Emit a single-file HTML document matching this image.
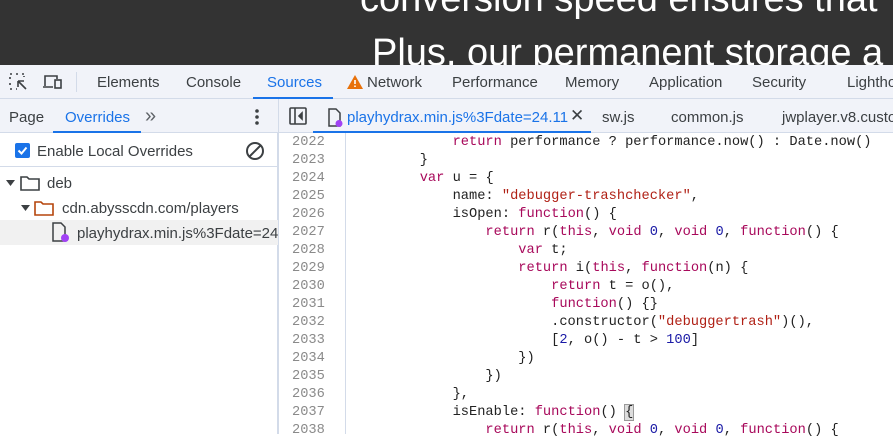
<!DOCTYPE html>
<html><head><style>
*{margin:0;padding:0;box-sizing:border-box}
body{width:893px;height:434px;overflow:hidden;position:relative;background:#fff;font-family:"Liberation Sans",Arial,sans-serif}
.top{position:absolute;left:0;top:0;width:893px;height:65px;background:#333;overflow:hidden}
.top div{position:absolute;color:#fff;font-size:38px;white-space:nowrap}
.bar{position:absolute;left:0;top:65px;width:893px;height:34px;background:#f1f3f9;border-bottom:1px solid #d3dbe9}
.t{position:absolute;font-size:15px;color:#3c4043;top:74px;white-space:nowrap}
.row2{position:absolute;top:99px;left:0;width:893px;height:34px;background:#f1f3f9;border-bottom:1px solid #d3dbe9}
.s{position:absolute;font-size:15px;color:#3c4043;white-space:nowrap}
.left{position:absolute;left:0;top:133px;width:278px;height:301px;background:#fff;border-right:1px solid #d3dbe9}
.gut{position:absolute;left:279px;top:133px;width:67px;height:301px;border-right:1px solid #d3dbe9;background:#fff}
pre{position:absolute;font-family:"Liberation Mono",monospace;font-size:13.7px;line-height:18px;white-space:pre}
.k{color:#a8095b}.str{color:#b02015}.n{color:#1a1aa6}
</style></head><body>
<div class="top"><div style="left:360px;top:-22px">conversion speed ensures that</div><div style="left:372px;top:32px">Plus, our permanent storage a</div></div>
<div class="bar"></div>
<svg style="position:absolute;left:8px;top:72px" width="22" height="20" viewBox="0 0 22 20" fill="none" stroke="#3c4043" stroke-width="1.6"><path d="M2 2h3M8 2h3M14 2h2v3M2 5v3M2 11v3M2 17h3M8 17h1" stroke-dasharray="2 2"/><path d="M10 9l8 8M10 9h6M10 9v6"/></svg>
<svg style="position:absolute;left:42px;top:73px" width="22" height="18" viewBox="0 0 22 18" fill="none" stroke="#3c4043" stroke-width="1.6"><path d="M3 13V3h12v3M1 14h10"/><rect x="13" y="7" width="6" height="8"/></svg>
<div style="position:absolute;left:76px;top:72px;width:1px;height:20px;background:#d3dbe9"></div>
<div class="t" style="left:97px">Elements</div>
<div class="t" style="left:186px">Console</div>
<div class="t" style="left:267px;color:#1a73e8">Sources</div>
<div style="position:absolute;left:253px;top:97px;width:80px;height:2px;background:#1a73e8"></div>
<svg style="position:absolute;left:347px;top:75px" width="16" height="14" viewBox="0 0 16 14"><path d="M8 0L16 14H0Z" fill="#e8710a"/><path d="M8 5v4M8 10.5v1.5" stroke="#fff" stroke-width="1.6"/></svg>
<div class="t" style="left:367px">Network</div>
<div class="t" style="left:452px">Performance</div>
<div class="t" style="left:565px">Memory</div>
<div class="t" style="left:649px">Application</div>
<div class="t" style="left:752px">Security</div>
<div class="t" style="left:847px">Lighthouse</div>
<div class="row2"></div>
<div class="s" style="left:9px;top:109px">Page</div>
<div class="s" style="left:65px;top:109px;color:#1a73e8">Overrides</div>
<div style="position:absolute;left:53px;top:131px;width:88px;height:2px;background:#1a73e8"></div>
<div class="s" style="left:145px;top:105px;font-size:20px;color:#5f6368">&#187;</div>
<svg style="position:absolute;left:254px;top:108px" width="6" height="18"><circle cx="3" cy="3" r="1.8" fill="#3c4043"/><circle cx="3" cy="9" r="1.8" fill="#3c4043"/><circle cx="3" cy="15" r="1.8" fill="#3c4043"/></svg>
<div style="position:absolute;left:278px;top:99px;width:1px;height:335px;background:#d3dbe9"></div>
<svg style="position:absolute;left:289px;top:107px" width="19" height="19" viewBox="0 0 19 19" fill="none" stroke="#3c4043" stroke-width="1.6"><rect x="1" y="1" width="16" height="16" rx="1"/><path d="M6 1v16"/><path d="M13 6l-3 3 3 3z" fill="#3c4043"/></svg>
<svg style="position:absolute;left:327px;top:108px" width="18" height="20" viewBox="0 0 18 20"><path d="M2 1h7l4 4v13H2z" fill="none" stroke="#3c4043" stroke-width="1.5"/><circle cx="12" cy="15.5" r="3.5" fill="#a142f4"/></svg>
<div class="s" style="left:347px;top:109px;color:#1a73e8">playhydrax.min.js%3Fdate=24.11</div>
<div class="s" style="left:570px;top:106px;font-size:17px;color:#3c4043">&#x2715;</div>
<div style="position:absolute;left:313px;top:131px;width:278px;height:2px;background:#1a73e8"></div>
<div class="s" style="left:602px;top:109px">sw.js</div>
<div class="s" style="left:671px;top:109px">common.js</div>
<div class="s" style="left:782px;top:109px">jwplayer.v8.custom.js</div>
<div class="left"></div>
<div style="position:absolute;left:15px;top:143px;width:15px;height:15px;background:#1a73e8;border-radius:2px"></div>
<svg style="position:absolute;left:15px;top:143px" width="15" height="15"><path d="M3.5 7.5l3 3 5-6" stroke="#fff" stroke-width="2" fill="none"/></svg>
<div class="s" style="left:37px;top:143px">Enable Local Overrides</div>
<svg style="position:absolute;left:245px;top:141px" width="20" height="20" viewBox="0 0 20 20" fill="none" stroke="#3c4043" stroke-width="2"><circle cx="10" cy="10" r="8"/><path d="M4.5 15.5l11-11"/></svg>
<div style="position:absolute;left:0;top:166px;width:278px;height:1px;background:#d3dbe9"></div>
<svg style="position:absolute;left:5px;top:175px" width="40" height="16"><path d="M1 5h9l-4.5 6z" fill="#3c4043"/><path d="M16 2h6l2 2h10v11H16z" fill="none" stroke="#3c4043" stroke-width="1.6"/></svg>
<div class="s" style="left:47px;top:175px">deb</div>
<svg style="position:absolute;left:20px;top:200px" width="40" height="16"><path d="M1 5h9l-4.5 6z" fill="#3c4043"/><path d="M15 2h6l2 2h10v11H15z" fill="none" stroke="#b5450b" stroke-width="1.6"/></svg>
<div class="s" style="left:62px;top:200px">cdn.abysscdn.com/players</div>
<div style="position:absolute;left:0;top:220px;width:278px;height:25px;background:#f1f1f1"></div>
<svg style="position:absolute;left:50px;top:221px" width="20" height="22" viewBox="0 0 20 22"><path d="M3 2h8l4 4v14H3z" fill="none" stroke="#3c4043" stroke-width="1.5"/><circle cx="15" cy="17" r="4" fill="#a142f4"/></svg>
<div class="s" style="left:77px;top:225px;color:#3c4043">playhydrax.min.js%3Fdate=24.</div>
<div class="gut"></div>
<pre style="left:292px;top:134px;color:#8a8a8a">2022
2023
2024
2025
2026
2027
2028
2029
2030
2031
2032
2033
2034
2035
2036
2037
2038</pre>
<pre style="left:354px;top:134px;color:#222">            <span class="k">return</span> performance ? performance.now() : Date.now()
        }
        <span class="k">var</span> u = {
            name: <span class="str">"debugger-trashchecker"</span>,
            isOpen: <span class="k">function</span>() {
                <span class="k">return</span> r(<span class="k">this</span>, <span class="k">void</span> <span class="n">0</span>, <span class="k">void</span> <span class="n">0</span>, <span class="k">function</span>() {
                    <span class="k">var</span> t;
                    <span class="k">return</span> i(<span class="k">this</span>, <span class="k">function</span>(n) {
                        <span class="k">return</span> t = o(),
                        <span class="k">function</span>() {}
                        .constructor(<span class="str">"debuggertrash"</span>)(),
                        [<span class="n">2</span>, o() - t > <span class="n">100</span>]
                    })
                })
            },
            isEnable: <span class="k">function</span>() <span style="background:#ddd;outline:1px solid #999">{</span>
                <span class="k">return</span> r(<span class="k">this</span>, <span class="k">void</span> <span class="n">0</span>, <span class="k">void</span> <span class="n">0</span>, <span class="k">function</span>() {</pre>
</body></html>
